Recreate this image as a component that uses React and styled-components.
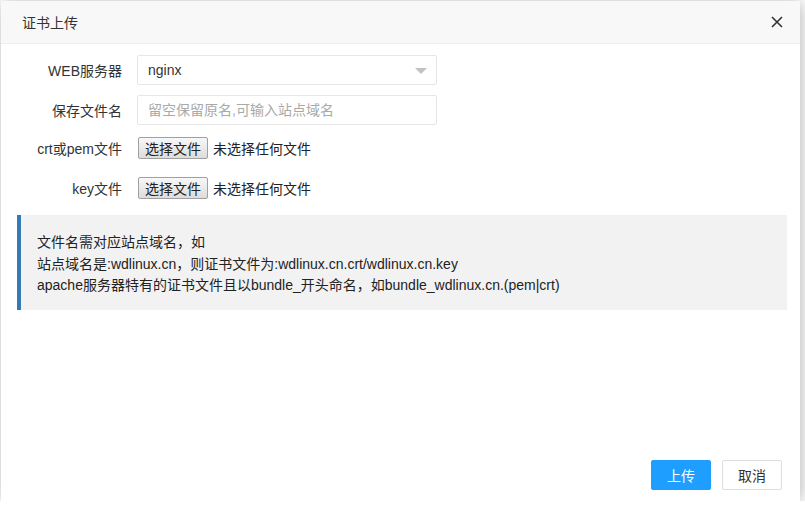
import styled, { createGlobalStyle } from 'styled-components';

const GlobalStyle = createGlobalStyle`
	html, body {
		margin: 0;
		padding: 0;
		background: #fff;
	}
	body {
		font-family: 'Liberation Sans', 'Noto Sans CJK SC', sans-serif;
		font-size: 14px;
		color: #333;
	}
`;

const CloseIcon = () => (
	<svg width='12' height='12' viewBox='0 0 12 12'>
		<path d='M1 1 L11 11 M11 1 L1 11' stroke='#333' strokeWidth='1.6' fill='none' />
	</svg>
);

const App = () => {
	return (
		<>
			<GlobalStyle />
			<Dialog>
				<Header>
					<Title>证书上传</Title>
					<CloseButton>
						<CloseIcon />
					</CloseButton>
				</Header>
				<Content>
					<Row>
						<Label>WEB服务器</Label>
						<Select>
							<span>nginx</span>
							<Arrow />
						</Select>
					</Row>
					<Row>
						<Label>保存文件名</Label>
						<Input placeholder='留空保留原名,可输入站点域名' />
					</Row>
					<FileRow>
						<Label>crt或pem文件</Label>
						<FileButton>选择文件</FileButton>
						<FileText>未选择任何文件</FileText>
					</FileRow>
					<FileRow>
						<Label>key文件</Label>
						<FileButton>选择文件</FileButton>
						<FileText>未选择任何文件</FileText>
					</FileRow>
					<Notice>
						<p>文件名需对应站点域名，如</p>
						<p>站点域名是:wdlinux.cn，则证书文件为:wdlinux.cn.crt/wdlinux.cn.key</p>
						<p>apache服务器特有的证书文件且以bundle_开头命名，如bundle_wdlinux.cn.(pem|crt)</p>
					</Notice>
				</Content>
				<Footer>
					<Button primary>上传</Button>
					<Button>取消</Button>
				</Footer>
			</Dialog>
		</>
	);
};

export default App;

const Dialog = styled.div`
	box-sizing: border-box;
	margin: 1px 0 0 1px;
	width: 799px;
	height: 500px;
	background: #fff;
	box-shadow: 1px 1px 16px rgba(0, 0, 0, 0.3);
	display: flex;
	flex-direction: column;
`;

const Header = styled.div`
	height: 42px;
	border-bottom: 1px solid #eee;
	background: #f8f8f8;
	display: flex;
	align-items: center;
	justify-content: space-between;
	padding: 0 17px 0 21px;
`;

const Title = styled.h2`
	margin: 0;
	font-size: 14px;
	font-weight: normal;
	color: #333;
`;

const CloseButton = styled.button`
	border: none;
	background: none;
	padding: 0;
	width: 12px;
	height: 12px;
	display: flex;
	cursor: pointer;
`;

const Content = styled.div`
	flex: 1;
	padding-top: 11px;
`;

const Row = styled.div`
	display: flex;
	align-items: center;
	height: 30px;
	margin-bottom: 10px;
`;

const FileRow = styled(Row)`
	height: 26px;
	margin-bottom: 14px;
`;

const Label = styled.label`
	width: 105px;
	margin: 0 15px 0 16px;
	text-align: right;
	white-space: nowrap;
`;

const Select = styled.div`
	box-sizing: border-box;
	width: 300px;
	height: 30px;
	border: 1px solid #e6e6e6;
	border-radius: 2px;
	padding: 0 10px;
	display: flex;
	align-items: center;
	justify-content: space-between;
`;

const Arrow = styled.i`
	width: 0;
	height: 0;
	border-left: 6px solid transparent;
	border-right: 6px solid transparent;
	border-top: 6px solid #c2c2c2;
	margin-right: -1px;
	margin-top: 2px;
`;

const Input = styled.input`
	box-sizing: border-box;
	width: 300px;
	height: 30px;
	border: 1px solid #e6e6e6;
	border-radius: 2px;
	padding: 0 10px;
	font: inherit;
	color: #333;
	outline: none;
	&::placeholder {
		color: #a9a9a9;
	}
`;

const FileButton = styled.button`
	height: 22px;
	padding: 0 6px;
	border: 1px solid #a0a0a0;
	border-radius: 2px;
	background: linear-gradient(#f8f8f8, #dcdcdc);
	font: inherit;
	color: #222;
	margin-left: 1px;
`;

const FileText = styled.span`
	margin-left: 5px;
	color: #222;
`;

const Notice = styled.div`
	margin: 0 13px 0 16px;
	padding: 17px 20px 13px 16px;
	border-left: 4px solid #337ab7;
	background: #f2f2f2;
	line-height: 21.5px;
	p {
		margin: 0;
		color: #222;
	}
`;

const Footer = styled.div`
	display: flex;
	justify-content: flex-end;
	gap: 11px;
	padding: 0 18px 11px;
`;

const Button = styled.button`
	height: 30px;
	padding: 0 15px;
	border: 1px solid ${(p) => (p.primary ? '#1e9fff' : '#dedede')};
	border-radius: 2px;
	background: ${(p) => (p.primary ? '#1e9fff' : '#fff')};
	color: ${(p) => (p.primary ? '#fff' : '#333')};
	font: inherit;
	cursor: pointer;
`;
